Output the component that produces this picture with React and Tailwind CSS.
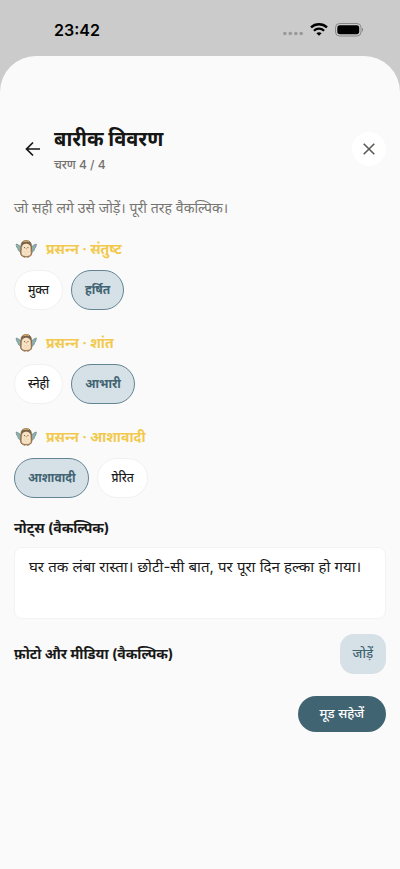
import React, { useState } from "react";

const groups = [
  { title: "प्रसन्‍न · संतुष्‍ट", options: [["मुक्त", false], ["हर्षित", true]] },
  { title: "प्रसन्‍न · शांत", options: [["स्नेही", false], ["आभारी", true]] },
  { title: "प्रसन्‍न · आशावादी", options: [["आशावादी", true], ["प्रेरित", false]] },
];

function Owl() {
  return (
    <svg className="h-5 w-6" viewBox="0 0 24 20" aria-hidden="true">
      <path d="M8 8.500C6 7.500 4.500 5.500 2.200 5c0 2.200.6 3.600 1.600 4.600.2 1.600 1 2.700 2 3.200.7.900 1.400 1.300 2.200 1.400z" fill="#8fb0ae" stroke="#6d8e8c" strokeWidth=".8" />
      <path d="M16.500 8.500c2-1 3.500-3 5.800-3.500 0 2.200-.6 3.600-1.600 4.600-.2 1.600-1 2.700-2 3.200-.7.900-1.400 1.300-2.200 1.400z" fill="#8fb0ae" stroke="#6d8e8c" strokeWidth=".8" />
      <path d="M12.200 1.600C8.800 1.600 7.200 3.500 7 6.500l-.4 7.500c0 2.800 1.800 3.800 5.600 3.800s5.600-1 5.600-3.800l-.4-7.500c-.2-3-1.800-4.900-5.200-4.900z" fill="#c49b6e" stroke="#85684a" strokeWidth=".9" />
      <path d="M7 8C7 4 8.900 2 12.200 2S17.400 4 17.400 8C16.500 6 15 4.800 12.200 4.400 9.500 4.800 8 6 7 8z" fill="#75624a" />
      <path d="M9.500 2.800c1.700-.8 3.700-.8 5.400 0" fill="none" stroke="#dfb75f" strokeWidth="1" />
      <path d="M12.200 4.800c-2.400 0-3.900 1.200-4.100 3.500l-.3 5.700c0 2.100 1.500 2.900 4.400 2.900s4.400-.8 4.400-2.900l-.3-5.700c-.2-2.300-1.700-3.500-4.100-3.500z" fill="#f6e2c4" />
      <circle cx="10.500" cy="8.600" r=".6" fill="#6d5b46" />
      <circle cx="13.900" cy="8.600" r=".6" fill="#6d5b46" />
      <path d="M11.500 9.300h1.400l-.7 1.500z" fill="#c98240" />
      <path d="M9.900 12.500l.6.600.6-.6M13.300 12.500l.6.600.6-.6M11.600 14.500l.6.600.6-.6" fill="none" stroke="#d9b18a" strokeWidth=".6" />
      <path d="M9.600 18.200h1.800M13 18.200h1.800" stroke="#9b713e" strokeWidth=".8" />
    </svg>
  );
}

function StatusBar() {
  return (
    <div className="flex h-14 items-center justify-between pl-[54px] pr-9 pt-1 text-black">
      <span className="text-base font-semibold">23:42</span>
      <div className="flex items-center gap-[7px]">
        <svg className="h-3.5 w-5" viewBox="0 0 20 14" fill="#999" aria-hidden="true">
          <circle cx="1.800" cy="10.500" r="1.800" />
          <circle cx="7.300" cy="10.500" r="1.800" />
          <circle cx="12.800" cy="10.500" r="1.800" />
          <circle cx="18.200" cy="10.500" r="1.800" />
        </svg>
        <svg className="h-3.5 w-[18px]" viewBox="0 0 18 14" aria-hidden="true">
          <path d="M1 4.400c4.500-4.200 11.500-4.200 16 0" fill="none" stroke="#000" strokeWidth="2.400" />
          <path d="M3.900 7.700c2.900-2.700 7.300-2.700 10.200 0" fill="none" stroke="#000" strokeWidth="2.200" />
          <path d="M9 12.800l-2.600-2.600c1.400-1.300 3.800-1.300 5.200 0z" fill="#000" />
        </svg>
        <svg className="h-3.5 w-[29px]" viewBox="0 0 29 14" aria-hidden="true">
          <rect x=".5" y=".5" width="25.500" height="12.500" rx="4" fill="none" stroke="#888" />
          <rect x="2.300" y="2.300" width="21.900" height="8.900" rx="2.600" fill="#000" />
          <path d="M27 4.700v4c1.500-.6 1.500-3.400 0-4z" fill="#888" />
        </svg>
      </div>
    </div>
  );
}

function Chip({ label, initial }) {
  const [on, setOn] = useState(initial);
  return (
    <button
      type="button"
      aria-pressed={on}
      onClick={() => setOn(!on)}
      className={
        "h-10 rounded-[20px] border px-[13px] text-xs leading-5 " +
        (on
          ? "border-[#628493] bg-[#d6e1e7] font-bold text-[#416473]"
          : "border-[#f1f1f1] bg-white font-medium text-[#191919]")
      }
    >
      {label}
    </button>
  );
}

export default function App() {
  return (
    <div className="flex min-h-screen flex-col bg-[#cbcbcb] font-['Inter','Noto_Sans','Noto_Sans_Devanagari',sans-serif]">
      <StatusBar />
      <main className="flex-1 rounded-t-[36px] bg-[#fafafa] px-3.5 pt-[67px]">
        <header className="flex items-center">
          <button type="button" aria-label="वापस" className="flex h-9 w-10 items-center justify-center pr-0.5">
            <svg className="h-4 w-4" viewBox="0 0 16 16" fill="none" stroke="#161616" strokeWidth="1.700" aria-hidden="true">
              <path d="M15 8H2M8 1.500L1.500 8 8 14.500" />
            </svg>
          </button>
          <div className="flex-1">
            <h1 className="text-xl leading-8 font-bold text-[#161616]">बारीक विवरण</h1>
            <p className="text-xs leading-5 font-medium text-[#72716d]">चरण 4 / 4</p>
          </div>
          <button type="button" aria-label="बंद करें" className="flex h-[34px] w-[34px] items-center justify-center rounded-full bg-white">
            <svg className="h-3 w-3" viewBox="0 0 12 12" fill="none" stroke="#5b5b57" strokeWidth="1.600" aria-hidden="true">
              <path d="M.7.7l10.600 10.600M11.300.7L.7 11.300" />
            </svg>
          </button>
        </header>

        <p className="mt-[21px] text-sm leading-6 text-[#767571]">जो सही लगे उसे जोड़ें। पूरी तरह वैकल्पिक।</p>

        <div className="mt-[17px] flex flex-col gap-[21px]">
          {groups.map((g) => (
            <section key={g.title}>
              <h2 className="flex h-6 items-center gap-2 text-sm leading-6 font-bold text-[#f2c94c]">
                <Owl />
                {g.title}
              </h2>
              <div className="mt-[9px] flex gap-2">
                {g.options.map(([label, on]) => (
                  <Chip key={label} label={label} initial={on} />
                ))}
              </div>
            </section>
          ))}
        </div>

        <label htmlFor="notes" className="mt-[18px] block text-sm leading-6 font-bold text-[#191919]">
          नोट्स (वैकल्पिक)
        </label>
        <textarea
          id="notes"
          defaultValue="घर तक लंबा रास्ता। छोटी-सी बात, पर पूरा दिन हल्का हो गया।"
          className="mt-[7px] block h-[72px] w-full resize-none rounded-lg border border-[#f3f3f3] bg-white px-3.5 py-[7px] text-[15px] leading-6 text-[#191919] outline-none"
        />

        <div className="mt-[15px] flex items-center justify-between">
          <h2 className="text-sm leading-6 font-bold text-[#191919]">फ़ोटो और मीडिया (वैकल्पिक)</h2>
          <button type="button" className="h-10 rounded-[14px] bg-[#d6e1e7] px-[13px] text-[13px] font-medium text-[#416473]">
            जोड़ें
          </button>
        </div>
        <div className="mt-[22px] flex justify-end">
          <button type="button" className="h-9 rounded-full bg-[#416473] px-[22px] text-[13px] font-medium text-white">
            मूड सहेजें
          </button>
        </div>
      </main>
    </div>
  );
}
